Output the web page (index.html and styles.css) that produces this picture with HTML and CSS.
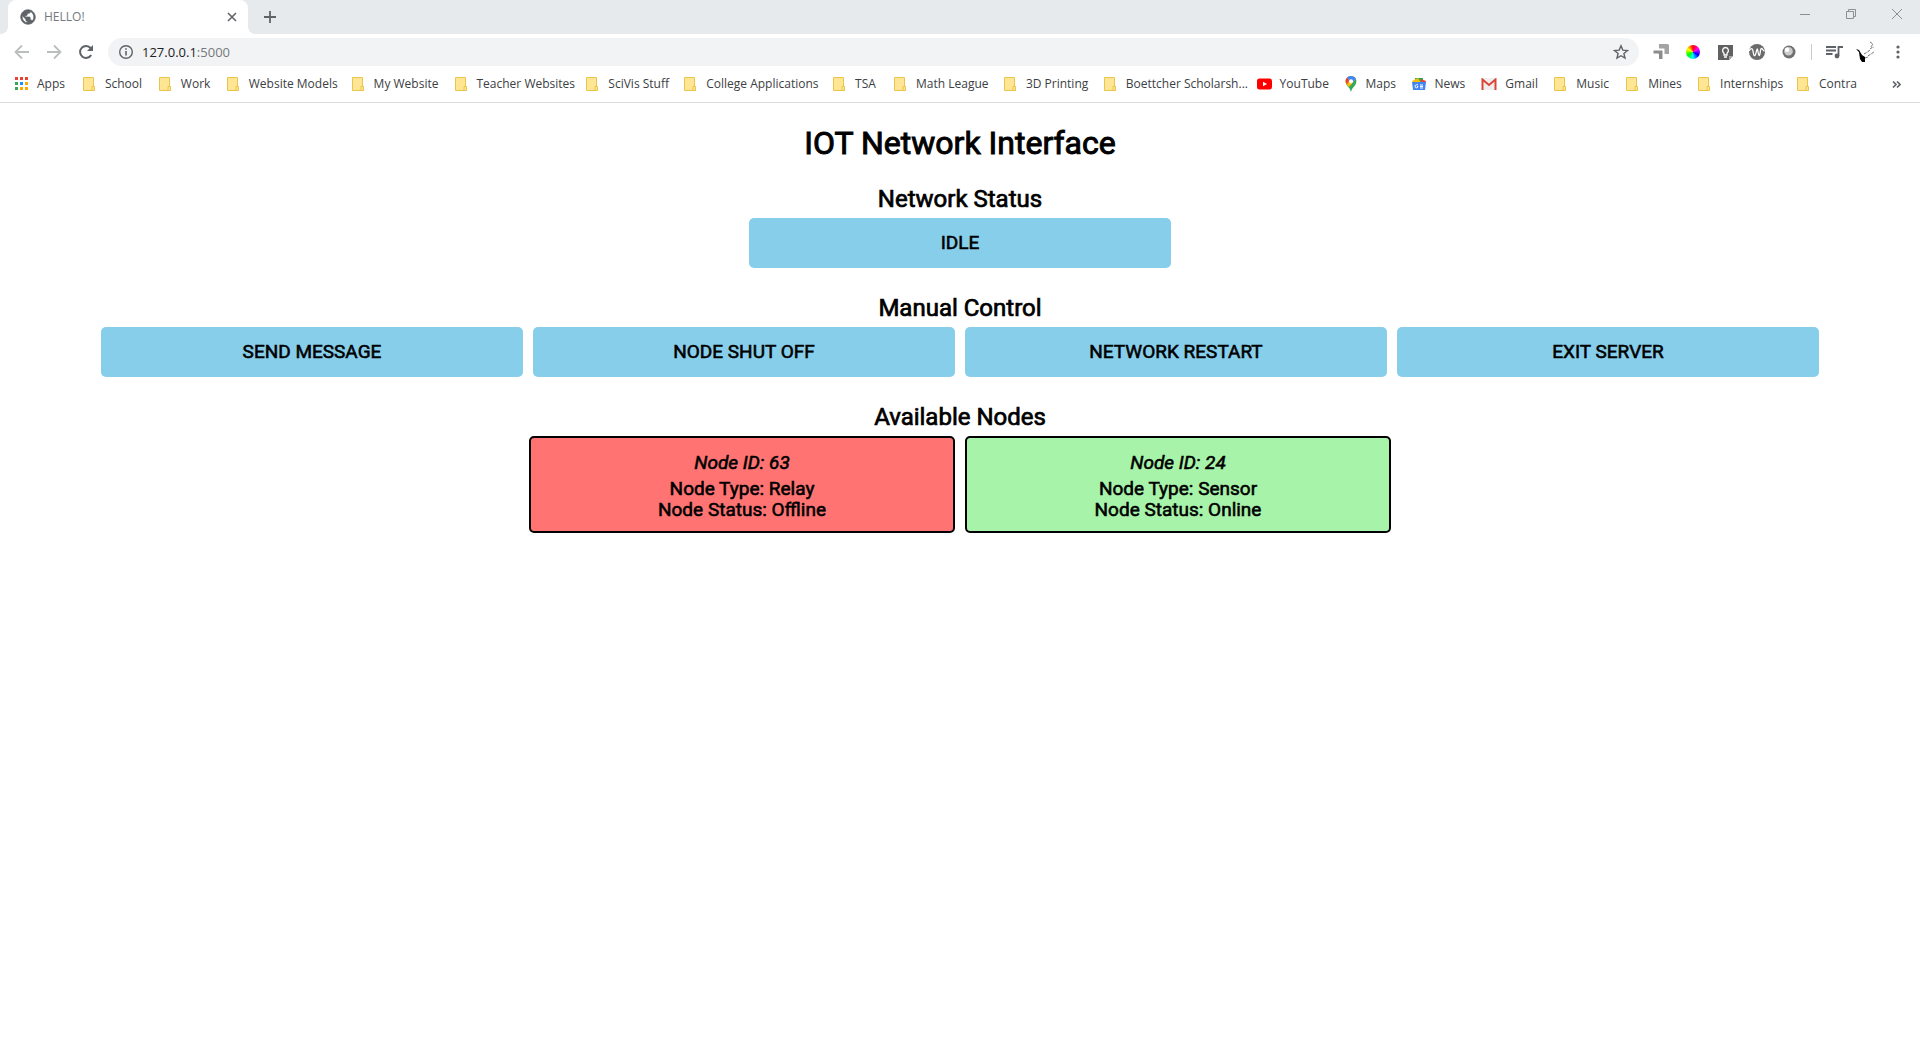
FILE: index.html
```html
<!DOCTYPE html>
<html lang="en">
<head>
<meta charset="utf-8">
<title>HELLO!</title>
<link rel="stylesheet" href="styles.css">
</head>
<body>
<svg class="defs" width="0" height="0" aria-hidden="true">
  <symbol id="folder" viewBox="0 0 14 16">
    <path d="M.5 1.500h10v9.500h1v3.500H.5z" fill="#ffe694" stroke="#e9c64b"/>
    <path d="M9 10.500h2.500v4H9z" fill="#ffe694" stroke="#e9c64b"/>
  </symbol>
</svg>
<header class="browser">
  <div class="tabstrip">
    <div class="tab">
      <svg class="favicon" width="16" height="16" viewBox="1 1 22 22"><path d="M12 2C6.480 2 2 6.480 2 12s4.480 10 10 10 10-4.480 10-10S17.520 2 12 2zm-1 17.930c-3.950-.49-7-3.850-7-7.930 0-.62.08-1.210.21-1.790L9 15v1c0 1.100.9 2 2 2v1.930zm6.900-2.540c-.26-.81-1-1.390-1.900-1.390h-1v-3c0-.55-.45-1-1-1H8v-2h2c.55 0 1-.45 1-1V7h2c1.100 0 2-.9 2-2v-.41c2.930 1.190 5 4.060 5 7.410 0 2.080-.8 3.970-2.100 5.390z" fill="#5f6368" stroke="#5f6368"/></svg>
      <span class="tab-title">HELLO!</span>
      <button class="icon-btn" aria-label="Close tab"><svg width="10" height="10" viewBox="0 0 10 10"><path d="M1 1l8 8M9 1 1 9" stroke="#5f6368" stroke-width="1.600"/></svg></button>
    </div>
    <button class="icon-btn new-tab" aria-label="New tab"><svg width="14" height="14" viewBox="0 0 14 14"><path d="M7 1v12M1 7h12" stroke="#5f6368" stroke-width="1.800"/></svg></button>
    <div class="window-controls">
      <button class="icon-btn" aria-label="Minimize"><svg width="10" height="10" viewBox="0 0 10 10"><path d="M0 5.500h10" stroke="#8b8e92"/></svg></button>
      <button class="icon-btn" aria-label="Restore"><svg width="10" height="10" viewBox="0 0 10 10"><path d="M.5 2.500h7v7h-7zM2.500 2.500v-2h7v7h-2" fill="none" stroke="#8b8e92"/></svg></button>
      <button class="icon-btn" aria-label="Close"><svg width="10" height="10" viewBox="0 0 10 10"><path d="M0 0l10 10M10 0 0 10" stroke="#8b8e92"/></svg></button>
    </div>
  </div>
  <div class="toolbar">
    <div class="nav">
      <button class="icon-btn" aria-label="Back"><svg width="16" height="16" viewBox="0 0 16 16"><path d="M15 8H2M8 1.500 1.500 8 8 14.500" fill="none" stroke="#bbbdbf" stroke-width="1.800"/></svg></button>
      <button class="icon-btn" aria-label="Forward"><svg width="16" height="16" viewBox="0 0 16 16"><path d="M1 8h13M8 1.500 14.500 8 8 14.500" fill="none" stroke="#bbbdbf" stroke-width="1.800"/></svg></button>
      <button class="icon-btn" aria-label="Reload"><svg width="16" height="16" viewBox="0 0 16 16"><path d="M13.200 11A6 6 0 1 1 12.600 4" fill="none" stroke="#5f6368" stroke-width="2"/><path d="M15 1v6H9z" fill="#5f6368"/></svg></button>
    </div>
    <div class="omnibox">
      <svg width="16" height="16" viewBox="0 0 16 16"><circle cx="8" cy="8" r="6.300" fill="none" stroke="#5f6368" stroke-width="1.400"/><path d="M8 7v4.500M8 4.200v1.600" stroke="#5f6368" stroke-width="1.600"/></svg>
      <span class="url">127.0.0.1<span class="port">:5000</span></span>
      <button class="icon-btn" aria-label="Bookmark this page"><svg width="16" height="16" viewBox="0 0 16 16"><path d="M8 1.800l1.800 4.300 4.700.4-3.600 3 1.100 4.600L8 11.700l-4 2.400 1.100-4.600-3.600-3 4.700-.4z" fill="none" stroke="#5f6368" stroke-width="1.400"/></svg></button>
    </div>
    <div class="extensions">
      <button class="icon-btn" aria-label="Screen extension"><svg width="18" height="18" viewBox="0 0 18 18"><path d="M7 1h8.500q1.500 0 1.500 1.500V11h-4.500V5.500H7z" fill="#a3a3a3"/><path d="M1 7h8.500q1.500 0 1.500 1.500v8H6.500V11H1z" fill="#8c8c8c" stroke="#fff"/></svg></button>
      <button class="icon-btn" aria-label="Color picker"><span class="wheel"></span></button>
      <button class="icon-btn" aria-label="Keep"><svg width="16" height="16" viewBox="0 0 16 16"><path d="M1 1h15v11l-4 4H1z" fill="#616161"/><path d="M12 16v-4h4z" fill="#aaa"/><path d="M7 9.200C4.500 7.500 5.500 3.500 8.500 3.500s4 4 1.500 5.700V11H7zM7 13h3" fill="none" stroke="#fff" stroke-width="1.300"/></svg></button>
      <button class="icon-btn" aria-label="Wave extension"><svg width="16" height="16" viewBox="0 0 16 16"><circle cx="8" cy="8" r="8" fill="#6b6b6b"/><path d="M0 7C2 4 3.500 3.500 4 7s1 5 2 4.500S7.500 5 8.300 5s.7 6.500 1.900 6.500S11 4.500 12.500 4.500 14 7 15.500 7" fill="none" stroke="#fff" stroke-width="1.300"/></svg></button>
      <button class="icon-btn" aria-label="Sphere extension"><svg width="14" height="14" viewBox="0 0 14 14"><circle cx="7" cy="7" r="6.500" fill="#707070"/><circle cx="6.500" cy="6.300" r="4.300" fill="#ccc"/><circle cx="5" cy="4.800" r="2.200" fill="#fff"/></svg></button>
    </div>
    <div class="profile">
      <button class="icon-btn" aria-label="Media controls"><svg width="17" height="14" viewBox="0 0 17 14"><path d="M0 2h10M0 5.500h10M0 9h6.500M12.500 11V2H17" fill="none" stroke="#5f6368" stroke-width="1.800"/><circle cx="11" cy="11" r="2.400" fill="#5f6368"/></svg></button>
      <button class="icon-btn" aria-label="Profile"><svg width="22" height="22" viewBox="0 0 22 22"><path d="M1 8l3 1 3 5 3 2v5H7l-2-3-1-7z" fill="#000"/><path d="M9 13l5-3 2-3 3-1M13 15l6-4M15 1l3 2-2 3M10 17l3-1" fill="none" stroke="#777" stroke-dasharray="3 1"/></svg></button>
      <button class="icon-btn" aria-label="Menu"><svg width="4" height="14" viewBox="0 0 4 14"><circle cx="2" cy="2" r="1.600" fill="#5f6368"/><circle cx="2" cy="7" r="1.600" fill="#5f6368"/><circle cx="2" cy="12" r="1.600" fill="#5f6368"/></svg></button>
    </div>
  </div>
  <nav class="bookmarks" aria-label="Bookmarks">
    <div class="bookmark-list">
      <a href="#"><svg width="14" height="14" viewBox="0 0 14 14"><path d="M0 0h3v3H0zM5 0h3v3H5zM10 0h3v3h-3z" fill="#ea4335"/><path d="M0 5h3v3H0zM0 10h3v3H0z" fill="#34a853"/><path d="M5 5h3v3H5z" fill="#1a90ff"/><path d="M10 5h3v3h-3zM5 10h3v3H5zM10 10h3v3h-3z" fill="#f9ab00"/></svg>Apps</a>
      <a href="#"><svg width="14" height="16"><use href="#folder"/></svg>School</a>
      <a href="#"><svg width="14" height="16"><use href="#folder"/></svg>Work</a>
      <a href="#"><svg width="14" height="16"><use href="#folder"/></svg>Website Models</a>
      <a href="#"><svg width="14" height="16"><use href="#folder"/></svg>My Website</a>
      <a href="#"><svg width="14" height="16"><use href="#folder"/></svg>Teacher Websites</a>
      <a href="#"><svg width="14" height="16"><use href="#folder"/></svg>SciVis Stuff</a>
      <a href="#"><svg width="14" height="16"><use href="#folder"/></svg>College Applications</a>
      <a href="#"><svg width="14" height="16"><use href="#folder"/></svg>TSA</a>
      <a href="#"><svg width="14" height="16"><use href="#folder"/></svg>Math League</a>
      <a href="#"><svg width="14" height="16"><use href="#folder"/></svg>3D Printing</a>
      <a href="#"><svg width="14" height="16"><use href="#folder"/></svg>Boettcher Scholarsh...</a>
      <a href="#"><svg width="15" height="12" viewBox="0 0 15 12"><rect width="15" height="11" y=".5" rx="2.500" fill="#f00"/><path d="M6 3.800v4.400L10 6z" fill="#fff"/></svg>YouTube</a>
      <a href="#"><svg width="14" height="16" viewBox="0 0 14 16"><path d="M2.500 8.500C0 4 3 0 7 0s7 4 4.500 8.500C10 11 8 12 7 16 6 12 4 11 2.500 8.500z" fill="#34a853"/><path d="M2 7.500C.5 4 3 0 7 0c2 0 4 1 5 3L5 11z" fill="#fbbc04"/><path d="M1.800 5C1.500 4 2 3 3 1.800L6 4.500 2.500 8.500z" fill="#ea4335"/><path d="M3 1.800C5-.5 10-.8 12 3L8.500 7 5 4z" fill="#4285f4"/><circle cx="7" cy="5.300" r="2.100" fill="#fff"/></svg>Maps</a>
      <a href="#"><svg width="14" height="14" viewBox="0 0 14 14"><path d="M3 1h8v5H3z" fill="#34a853"/><path d="M0 4l6-3 3 5H1z" fill="#fbbc04"/><path d="M9 2l5 2-1 3H9z" fill="#ea4335"/><path d="M0 5h14l-1 8H1z" fill="#4285f4"/><path d="M6 7.800H4.500a1.500 1.500 0 1 0 1.500 1.700H5M8 8h3M8 9.500h3M8 11h3" fill="none" stroke="#fff"/></svg>News</a>
      <a href="#"><svg width="16" height="12" viewBox="0 0 16 12"><path d="M1 0h14v12H1z" fill="#eee"/><path d="M1.500 12V1.500L8 7l6.500-5.500V12" fill="none" stroke="#db4437" stroke-width="2"/></svg>Gmail</a>
      <a href="#"><svg width="14" height="16"><use href="#folder"/></svg>Music</a>
      <a href="#"><svg width="14" height="16"><use href="#folder"/></svg>Mines</a>
      <a href="#"><svg width="14" height="16"><use href="#folder"/></svg>Internships</a>
      <a href="#"><svg width="14" height="16"><use href="#folder"/></svg>Contra</a>
    </div>
    <button class="icon-btn" aria-label="More bookmarks"><svg width="9" height="7" viewBox="0 0 9 7"><path d="M1 .5l3 3-3 3M5 .5l3 3-3 3" fill="none" stroke="#5f6368" stroke-width="1.600"/></svg></button>
  </nav>
</header>
<main class="page">
  <h1>IOT Network Interface</h1>
  <section>
    <h2>Network Status</h2>
    <div class="row"><div class="tile">IDLE</div></div>
  </section>
  <section>
    <h2>Manual Control</h2>
    <div class="row">
      <button class="tile">SEND MESSAGE</button>
      <button class="tile">NODE SHUT OFF</button>
      <button class="tile">NETWORK RESTART</button>
      <button class="tile">EXIT SERVER</button>
    </div>
  </section>
  <section>
    <h2>Available Nodes</h2>
    <div class="row">
      <article class="node offline"><h3>Node ID: 63</h3><p>Node Type: Relay</p><p>Node Status: Offline</p></article>
      <article class="node online"><h3>Node ID: 24</h3><p>Node Type: Sensor</p><p>Node Status: Online</p></article>
    </div>
  </section>
</main>
</body>
</html>
```
FILE: styles.css
```css
* { box-sizing: border-box; }

body {
  margin: 0;
  background: #fff;
  color: #000;
  font-family: Roboto, sans-serif;
}

.defs { position: absolute; }

/* Browser frame */
.browser {
  border-bottom: 1px solid #d8dadc;
  font-family: "Open Sans", "Noto Sans", sans-serif;
  font-size: 12px;
  line-height: 16px;
  color: #3c4043;
}

.browser svg { display: block; flex: none; }

.icon-btn {
  display: flex;
  align-items: center;
  justify-content: center;
  flex: none;
  padding: 0;
  border: 0;
  background: none;
}

.tabstrip {
  display: flex;
  height: 34px;
  padding-left: 8px;
  background: #e6eaed;
}

.tab {
  position: relative;
  display: flex;
  align-items: center;
  gap: 8px;
  width: 240px;
  padding: 0 11px 0 12px;
  border-radius: 8px 8px 0 0;
  background: #fff;
}

.tab::before,
.tab::after {
  content: "";
  position: absolute;
  bottom: 0;
  width: 8px;
  height: 8px;
}

.tab::before { right: 100%; background: radial-gradient(circle at 0 0, #e6eaed 8px, #fff 8px); }
.tab::after { left: 100%; background: radial-gradient(circle at 100% 0, #e6eaed 8px, #fff 8px); }

.tab-title { flex: 1; color: #75797d; }
.new-tab { width: 44px; }

.window-controls {
  display: flex;
  align-items: center;
  margin-left: auto;
  height: 28px;
}

.window-controls .icon-btn { width: 46px; height: 28px; }

.toolbar {
  display: flex;
  align-items: center;
  height: 36px;
  padding-right: 6px;
}

.nav { display: flex; gap: 16px; padding: 0 14px; }

.omnibox {
  display: flex;
  align-items: center;
  flex: 1;
  gap: 8px;
  height: 28px;
  padding: 0 10px;
  border-radius: 14px;
  background: #f1f3f4;
}

.url { flex: 1; font-size: 13px; color: #202124; }
.port { color: #75797d; }

.extensions {
  display: flex;
  padding: 0 6px;
  border-right: 1px solid #c8cacc;
  height: 16px;
}

.extensions .icon-btn,
.profile .icon-btn { width: 32px; height: 16px; }

.wheel {
  width: 14px;
  height: 14px;
  border-radius: 50%;
  background: conic-gradient(red, #f0f, #00f, #0ff, #0f0, #ff0, red);
}

.profile { display: flex; align-items: center; padding-left: 6px; }

.bookmarks {
  display: flex;
  align-items: center;
  height: 32px;
  padding: 0 19px 4px 15px;
}

.bookmark-list {
  display: grid;
  grid-template-columns: 68fr 76fr 68fr 125fr 103fr 132fr 98fr 149fr 61fr 110fr 100fr 153fr 87fr 69fr 69fr 73fr 72fr 72fr 99fr 58fr;
  flex: 1;
  margin-right: 35px;
}

.bookmarks a {
  display: flex;
  align-items: center;
  gap: 8px;
  height: 16px;
  color: inherit;
  text-decoration: none;
  white-space: nowrap;
}

/* Page content */
.page { padding: 24px 5% 0; text-align: center; }

h1, h2, h3, p { margin: 0; font-weight: 400; }

h1, h2, .tile, .node { -webkit-text-stroke: 0.03em #000; }

h1 { font-size: 32px; line-height: 32px; }

section { padding-top: 24px; }

h2 { font-size: 24px; line-height: 32px; padding-bottom: 3px; }

.row { display: flex; justify-content: center; gap: 10px; }

.tile {
  flex: 0 1 422px;
  height: 50px;
  padding: 0;
  border: 0;
  border-radius: 5px;
  background: #87ceeb;
  color: #000;
  font: 400 19px/50px Roboto, sans-serif;
}

.node {
  flex: 0 1 426px;
  padding: 14px 15px 11px;
  border: 2px solid #000;
  border-radius: 5px;
  font-size: 19px;
  line-height: 21px;
}

.node h3 { font-size: 19px; font-style: italic; padding-bottom: 5px; }

.offline { background: #ff7373; }
.online { background: #a8f3aa; }
```
